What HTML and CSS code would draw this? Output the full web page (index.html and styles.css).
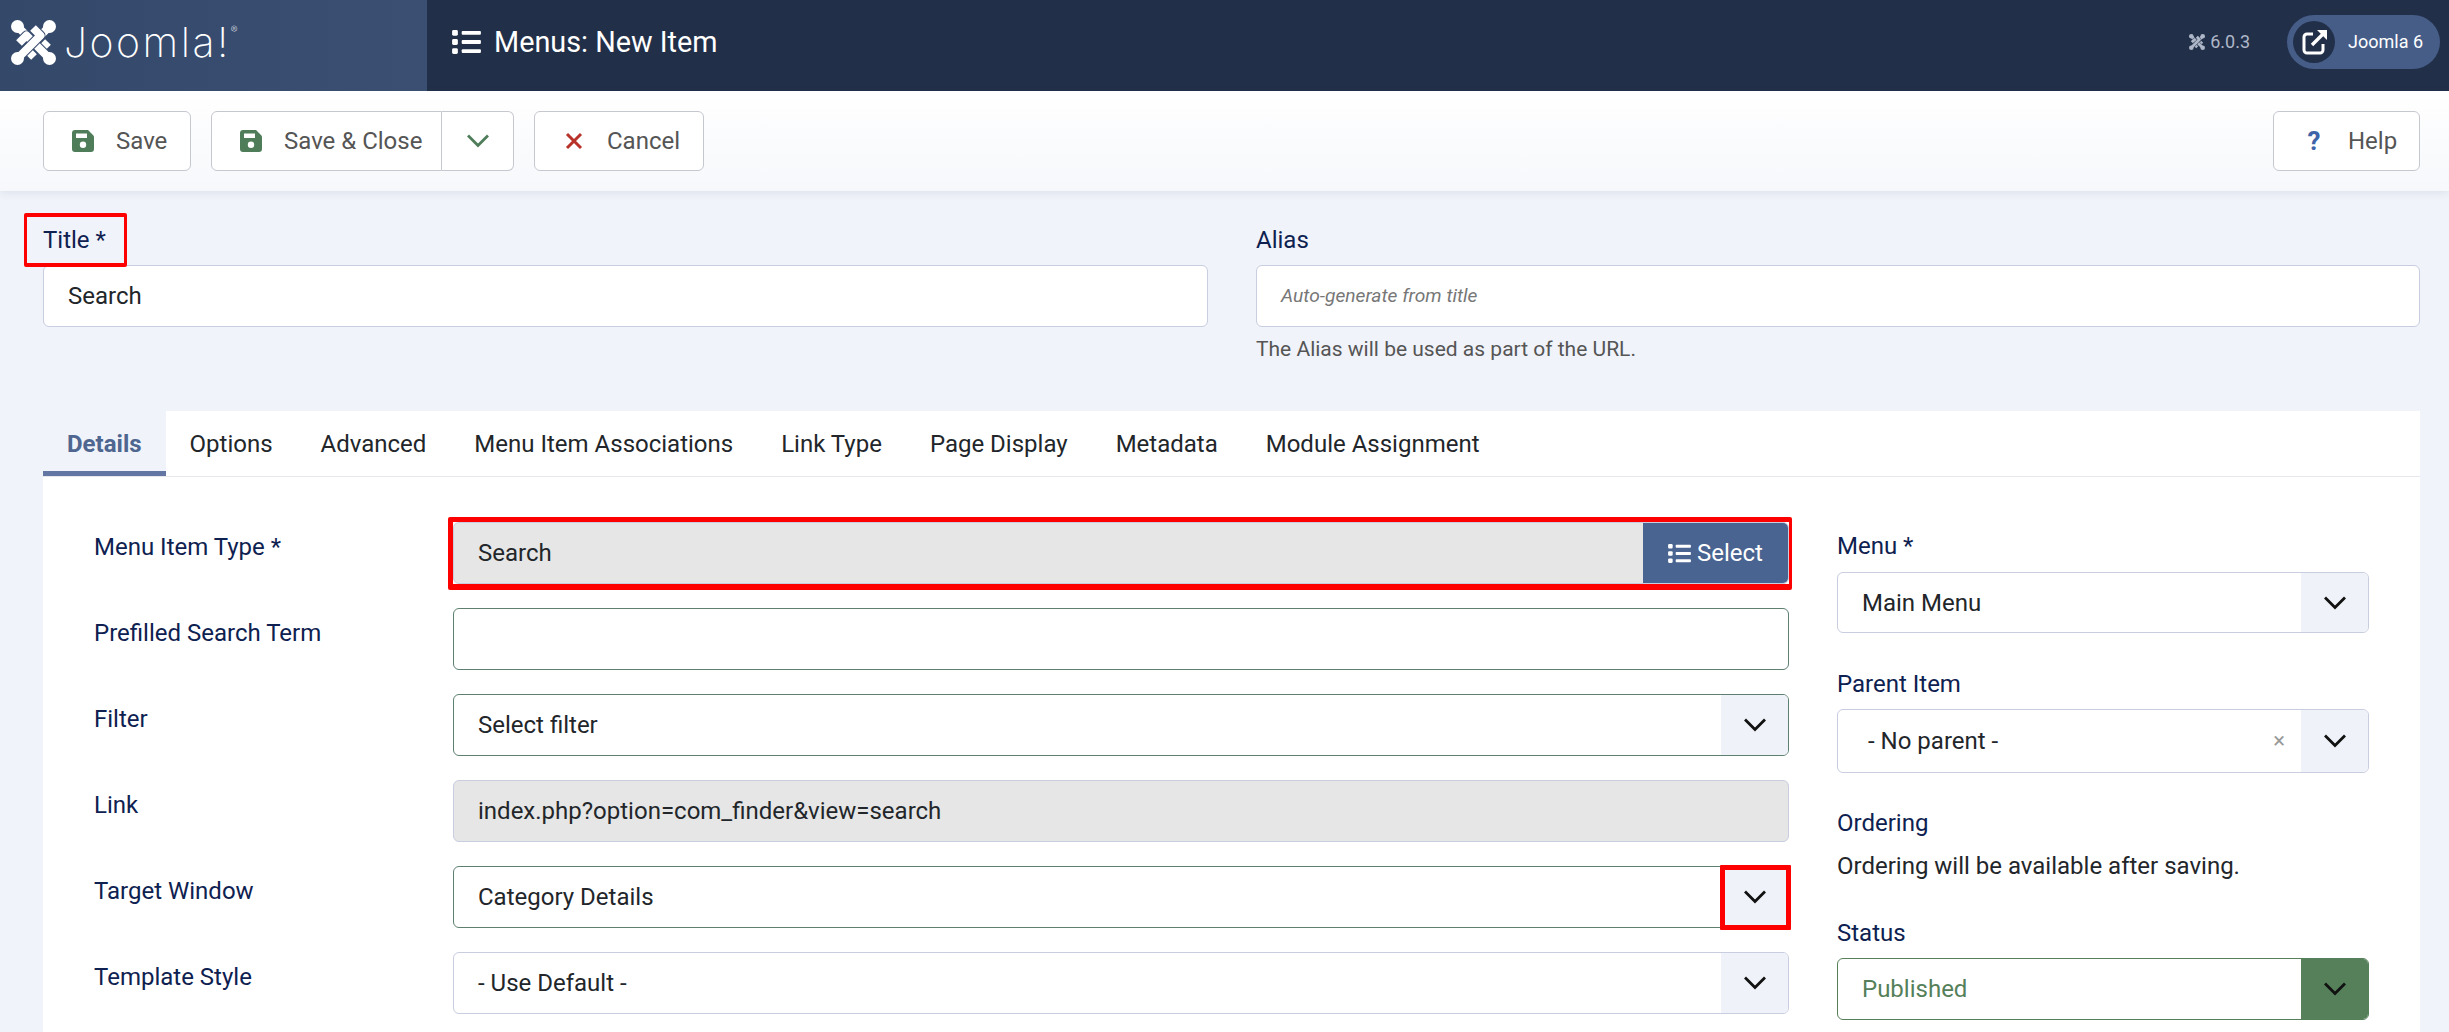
FILE: index.html
```html
<!DOCTYPE html>
<html lang="en">
<head>
  <meta charset="UTF-8">
  <meta name="viewport" content="width=device-width, initial-scale=1.0">
  <title>Menus: New Item</title>
  <link rel="stylesheet" href="styles.css">
</head>
<body>
  <!-- Shared icons -->
  <svg class="icon-defs" xmlns="http://www.w3.org/2000/svg">
    <symbol id="i-knot" viewBox="0 0 45 45">
      <g fill="none" stroke-linejoin="round">
        <path d="M7 7 29.5 29.5 37 22" stroke="var(--knot-bg)" stroke-width="10"/>
        <path d="M7 7 29.5 29.5 37 22" stroke="currentColor" stroke-width="8"/>
        <path d="M38 7 15.5 29.5 23 37" stroke="var(--knot-bg)" stroke-width="10"/>
        <path d="M38 7 15.5 29.5 23 37" stroke="currentColor" stroke-width="8"/>
        <path d="M38 38 15.5 15.5 8 23" stroke="var(--knot-bg)" stroke-width="10"/>
        <path d="M38 38 15.5 15.5 8 23" stroke="currentColor" stroke-width="8"/>
        <path d="M7 38 29.5 15.5 22 8" stroke="var(--knot-bg)" stroke-width="10"/>
        <path d="M7 38 29.5 15.5 22 8" stroke="currentColor" stroke-width="8"/>
      </g>
      <g fill="currentColor">
        <circle cx="6.5" cy="6.5" r="6.5"/>
        <circle cx="38.5" cy="6.5" r="6.5"/>
        <circle cx="6.5" cy="38.5" r="6.5"/>
        <circle cx="38.5" cy="38.5" r="6.5"/>
      </g>
    </symbol>
    <symbol id="i-list" viewBox="0 0 30 25">
      <g fill="currentColor">
        <rect x="0" y="0" width="6" height="6" rx="1.5"/>
        <rect x="0" y="9.5" width="6" height="6" rx="1.5"/>
        <rect x="0" y="19" width="6" height="6" rx="1.5"/>
        <rect x="10" y="1" width="20" height="4" rx="1"/>
        <rect x="10" y="10.5" width="20" height="4" rx="1"/>
        <rect x="10" y="20" width="20" height="4" rx="1"/>
      </g>
    </symbol>
    <symbol id="i-save" viewBox="0 0 22 22">
      <path fill="currentColor" fill-rule="evenodd" d="M3 0h13l5 5c.6.6 1 1.3 1 2v12a3 3 0 0 1-3 3H3a3 3 0 0 1-3-3V3a3 3 0 0 1 3-3Zm1 3.5V8h11V3.5H4ZM11 11.5a3.2 3.2 0 1 0 0 6.4 3.2 3.2 0 0 0 0-6.4Z"/>
    </symbol>
    <symbol id="i-chevron" viewBox="0 0 22 14">
      <path fill="none" stroke="currentColor" stroke-width="2.8" stroke-linecap="square" d="M2 2.5 11 11.5 20 2.5"/>
    </symbol>
  </svg>

  <header class="topbar">
    <a class="brand">
      <svg class="brand-knot"><use href="#i-knot"/></svg>
      <span class="brand-name">Joomla!<sup>®</sup></span>
    </a>
    <div class="topbar-main">
      <svg class="page-icon"><use href="#i-list"/></svg>
      <h1 class="page-title">Menus: New Item</h1>
      <span class="version">
        <svg class="version-knot"><use href="#i-knot"/></svg>
        6.0.3
      </span>
      <a class="site-pill">
        <span class="site-pill-icon">
          <svg viewBox="0 0 25 25" width="25" height="25">
            <path fill="none" stroke="#fff" stroke-width="3" d="M11 4H5a3 3 0 0 0-3 3v13a3 3 0 0 0 3 3h13a3 3 0 0 0 3-3v-6"/>
            <path fill="none" stroke="#fff" stroke-width="3.4" d="M10 15 22 3"/>
            <path fill="#fff" d="M15 0h10v10z"/>
          </svg>
        </span>
        Joomla 6
      </a>
    </div>
  </header>

  <div class="toolbar">
    <button class="btn btn-first">
      <svg class="btn-icon"><use href="#i-save"/></svg>Save
    </button>
    <div class="btn-group">
      <button class="btn">
        <svg class="btn-icon"><use href="#i-save"/></svg>Save &amp; Close
      </button>
      <button class="btn-toggle"><svg class="toggle-icon"><use href="#i-chevron"/></svg></button>
    </div>
    <button class="btn btn-cancel">
      <svg class="cancel-icon" viewBox="0 0 18 18"><path fill="none" stroke="currentColor" stroke-width="3" d="M2 2 16 16M16 2 2 16"/></svg>Cancel
    </button>
    <button class="btn btn-help"><span class="help-mark">?</span>Help</button>
  </div>

  <main class="content">
    <div class="title-row">
      <div>
        <label class="title-label title-marked">Title *</label>
        <div class="control">Search</div>
      </div>
      <div>
        <label class="title-label">Alias</label>
        <div class="control placeholder">Auto-generate from title</div>
        <p class="hint">The Alias will be used as part of the URL.</p>
      </div>
    </div>

    <section class="card">
      <nav class="tabs">
        <a class="tab active">Details</a>
        <a class="tab">Options</a>
        <a class="tab">Advanced</a>
        <a class="tab">Menu Item Associations</a>
        <a class="tab">Link Type</a>
        <a class="tab">Page Display</a>
        <a class="tab">Metadata</a>
        <a class="tab">Module Assignment</a>
      </nav>

      <div class="card-body">
        <div class="fields">
          <div class="field">
            <label>Menu Item Type *</label>
            <div class="control disabled type-control">
              <span class="grow">Search</span>
              <span class="select-btn"><svg class="select-icon"><use href="#i-list"/></svg>Select</span>
            </div>
          </div>
          <div class="field">
            <label>Prefilled Search Term</label>
            <div class="control valid"></div>
          </div>
          <div class="field">
            <label>Filter</label>
            <div class="control valid has-arrow">
              <span class="grow">Select filter</span>
              <span class="arrow"><svg class="arrow-icon"><use href="#i-chevron"/></svg></span>
            </div>
          </div>
          <div class="field">
            <label>Link</label>
            <div class="control disabled">index.php?option=com_finder&amp;view=search</div>
          </div>
          <div class="field">
            <label>Target Window</label>
            <div class="control valid has-arrow">
              <span class="grow">Category Details</span>
              <span class="arrow arrow-marked"><svg class="arrow-icon"><use href="#i-chevron"/></svg></span>
            </div>
          </div>
          <div class="field">
            <label>Template Style</label>
            <div class="control has-arrow">
              <span class="grow">- Use Default -</span>
              <span class="arrow"><svg class="arrow-icon"><use href="#i-chevron"/></svg></span>
            </div>
          </div>
        </div>

        <aside class="side">
          <label class="side-label side-menu-label">Menu *</label>
          <div class="control has-arrow side-menu">
            <span class="grow">Main Menu</span>
            <span class="arrow"><svg class="arrow-icon"><use href="#i-chevron"/></svg></span>
          </div>
          <label class="side-label side-parent">Parent Item</label>
          <div class="control has-arrow parent-control">
            <span class="grow">- No parent -</span>
            <span class="clear">×</span>
            <span class="arrow"><svg class="arrow-icon"><use href="#i-chevron"/></svg></span>
          </div>
          <label class="side-label side-ordering">Ordering</label>
          <p class="side-text">Ordering will be available after saving.</p>
          <label class="side-label side-status">Status</label>
          <div class="control valid has-arrow status-control">
            <span class="grow">Published</span>
            <span class="arrow"><svg class="arrow-icon"><use href="#i-chevron"/></svg></span>
          </div>
        </aside>
      </div>
    </section>
  </main>
</body>
</html>
```

FILE: styles.css
```css
/* Base */
html, body {
  height: 100%;
  overflow: hidden;
}

body {
  margin: 0;
  font-family: Roboto, 'Liberation Sans', sans-serif;
  font-size: 24px;
  line-height: 28px;
  color: #22262a;
  background-color: #f0f3f9;
  --knot-bg: #384c6e;
}

.icon-defs {
  display: none;
}

svg {
  display: block;
  flex: none;
}

/* Top bar */
.topbar {
  display: flex;
  height: 91px;
  background-color: #222f48;
  color: #fff;
}

.brand {
  display: flex;
  align-items: center;
  gap: 8px;
  width: 427px;
  padding: 0 0 7px 11px;
  box-sizing: border-box;
  background: linear-gradient(90deg, #34486a, #3a4f72);
}

.brand-knot {
  width: 45px;
  height: 45px;
}

.brand-name {
  font-family: Inter, sans-serif;
  font-weight: 200;
  font-size: 41px;
  letter-spacing: 2.5px;
  line-height: 1;
}

.brand-name sup {
  font-size: 10px;
  vertical-align: 24px;
  line-height: 0;
  letter-spacing: 0;
}

.topbar-main {
  flex: 1;
  display: flex;
  align-items: center;
  padding: 0 9px 7px 25px;
}

.page-icon {
  width: 29px;
  height: 24px;
  margin-right: 13px;
}

.page-title {
  flex: 1;
  margin: 0;
  font-size: 28.8px;
  font-weight: 400;
}

.version {
  display: flex;
  align-items: center;
  gap: 5px;
  margin-right: 37px;
  font-size: 18px;
  color: #aeb7c8;
  --knot-bg: #222f48;
}

.version-knot {
  width: 16px;
  height: 16px;
}

.site-pill {
  display: flex;
  align-items: center;
  gap: 13px;
  width: 153px;
  height: 54px;
  box-sizing: border-box;
  padding-left: 6px;
  border-radius: 27px;
  background-color: #465d88;
  font-size: 18px;
}

.site-pill-icon {
  display: flex;
  align-items: center;
  justify-content: center;
  width: 42px;
  height: 42px;
  border-radius: 50%;
  background-color: #222f48;
}

/* Toolbar */
.toolbar {
  display: flex;
  gap: 20px;
  height: 100px;
  box-sizing: border-box;
  padding: 20px 29px 20px 43px;
  background: linear-gradient(#fff, #f6f8fb);
  box-shadow: 0 2px 8px rgba(60, 80, 120, 0.1);
}

.btn, .btn-toggle {
  display: flex;
  align-items: center;
  height: 60px;
  box-sizing: border-box;
  background-color: #fff;
  border: 1px solid #c5c8cf;
  border-radius: 6px;
  font: inherit;
  color: #555;
  white-space: nowrap;
}

.btn {
  padding: 0 0 0 28px;
}

.btn-first {
  width: 148px;
}

.btn-icon {
  width: 22px;
  height: 22px;
  margin-right: 22px;
  color: #4f7d5a;
}

.btn-group {
  display: flex;
}

.btn-group .btn {
  border-radius: 6px 0 0 6px;
  width: 231px;
}

.btn-toggle {
  width: 72px;
  justify-content: center;
  border-left: 0;
  border-radius: 0 6px 6px 0;
}

.toggle-icon {
  width: 22px;
  height: 14px;
  color: #4f7d5a;
}

.cancel-icon {
  width: 18px;
  height: 18px;
  margin-right: 24px;
  color: #b8322a;
}

.btn-cancel {
  width: 170px;
  padding-left: 30px;
}

.btn-help {
  margin-left: auto;
  width: 147px;
  padding-left: 33px;
}

.help-mark {
  width: 14px;
  margin-right: 27px;
  font-weight: 700;
  font-size: 26px;
  color: #3f64a8;
}

/* Form controls */
.content {
  padding: 26px 29px 0 43px;
}

.title-row {
  display: grid;
  grid-template-columns: 1165px 1164px;
  gap: 48px;
  height: 194px;
}

.title-label {
  display: flex;
  align-items: center;
  height: 46px;
  margin-bottom: 2px;
  color: #0e2150;
}

.control {
  display: flex;
  align-items: center;
  height: 62px;
  box-sizing: border-box;
  padding-left: 24px;
  background-color: #fff;
  border: 1px solid #c8cde0;
  border-radius: 6px;
}

.control .grow {
  flex: 1;
}

.placeholder {
  font-size: 19.2px;
  font-style: italic;
  color: #777;
}

.hint {
  margin: 8px 0 0;
  font-size: 21px;
  color: #555;
}

.valid {
  border-color: #5d8070;
}

.disabled {
  background-color: #e6e6e6;
}

.arrow {
  display: flex;
  align-items: center;
  justify-content: center;
  width: 67px;
  align-self: stretch;
  background-color: #eff2f8;
  border-radius: 0 5px 5px 0;
}

.arrow-icon {
  width: 22px;
  height: 14px;
  color: #111;
}

/* Red highlights drawn over the form */
.title-marked {
  position: relative;
  width: 103px;
  box-sizing: border-box;
  margin-left: -19px;
  padding-left: 19px;
}

.title-marked::after {
  content: "";
  position: absolute;
  inset: -4px 0;
  border: solid #f00;
  border-width: 4px 3px;
  border-radius: 2px;
}

.field:first-child::after {
  content: "";
  position: absolute;
  inset: -5px -3px -6px -5px;
  border: solid #f00;
  border-width: 5px 3px 6px 5px;
  border-radius: 2px;
}

.arrow-marked {
  position: relative;
}

.arrow-marked::after {
  content: "";
  position: absolute;
  inset: -2px -3px -3px -1px;
  border: 5px solid #f00;
  border-radius: 1px;
}

/* Card with tabs */
.card {
  height: 621px;
  background-color: #fff;
}

.tabs {
  display: flex;
  height: 66px;
  box-sizing: border-box;
  border-bottom: 1px solid #e6e8ee;
}

.tab {
  display: flex;
  align-items: center;
  height: 65px;
  box-sizing: border-box;
  padding: 0 24px;
}

.tab.active {
  padding-top: 5px;
  font-weight: 700;
  color: #4e6690;
  background-color: #f0f3f9;
  border-bottom: 5px solid #6476a3;
}

.card-body {
  display: flex;
  gap: 48px;
  padding: 45px 51px 0;
}

.fields {
  width: 1336px;
  margin-left: 359px;
  display: flex;
  flex-direction: column;
  gap: 24px;
}

.field {
  position: relative;
}

.field label {
  position: absolute;
  left: -359px;
  top: 11px;
  color: #0e2150;
}

.select-btn {
  display: flex;
  align-items: center;
  gap: 6px;
  align-self: stretch;
  width: 145px;
  box-sizing: border-box;
  padding-left: 25px;
  background-color: #4a6491;
  color: #fff;
  border-radius: 0 5px 5px 0;
}

.select-icon {
  width: 23px;
  height: 19px;
}

/* Right column */
.side {
  width: 532px;
}

.side-label {
  display: block;
  margin-bottom: 11px;
  color: #0e2150;
}

.side-menu-label {
  margin-top: 10px;
  margin-bottom: 12px;
}

.side-menu {
  height: 61px;
}

.side-parent {
  margin-top: 37px;
}

.parent-control {
  height: 64px;
  padding-left: 30px;
}

.clear {
  margin-right: 16px;
  font-size: 22px;
  color: #999;
}

.side-ordering {
  margin-top: 36px;
  margin-bottom: 15px;
}

.side-text {
  margin: 0;
}

.side-status {
  margin-top: 39px;
}

.status-control {
  color: #55805a;
  border-color: #55805a;
}

.status-control .arrow {
  background-color: #55805a;
}
```
